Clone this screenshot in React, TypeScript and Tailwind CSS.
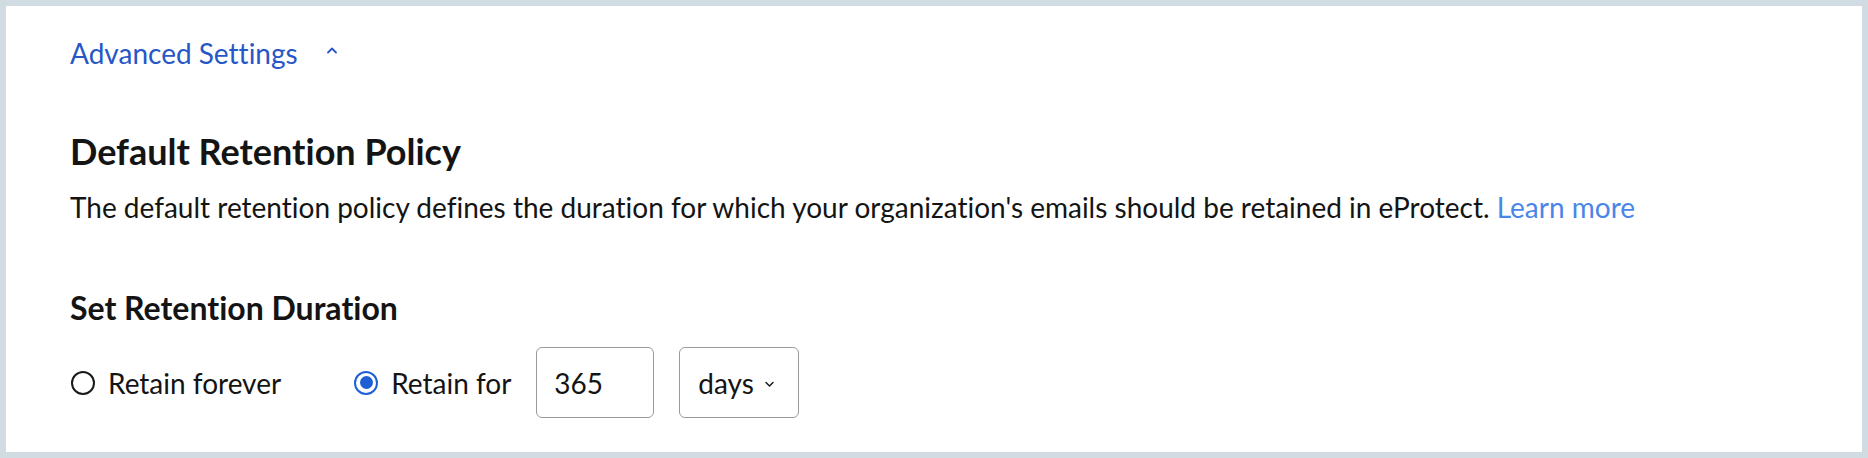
import { useState } from "react";

export default function App() {
  const [mode, setMode] = useState<"forever" | "for">("for");

  return (
    <div
      className="min-h-screen bg-[#d0dbe2] p-[6px] [font-variant-ligatures:none]"
      style={{ fontFamily: "Lato, 'Noto Sans', sans-serif" }}
    >
      <div className="h-[446px] bg-white pl-[64px] pt-[30px] text-[#141414]">
        {/* Advanced settings toggle */}
        <button className="flex items-center text-[28px] leading-[34px] text-[#2756c7]">
          <span>Advanced Settings</span>
          <svg className="ml-[28px] mt-[-6px] h-[10px] w-[12px]" viewBox="0 0 12 10" fill="none">
            <path d="M2 7.5 6 3.5l4 4" stroke="#2756c7" strokeWidth="1.8" strokeLinecap="round" strokeLinejoin="round" />
          </svg>
        </button>

        <h2 className="mt-[59px] text-[36px] font-bold leading-[44px]">Default Retention Policy</h2>
        <p className="mt-[17px] text-[28px] leading-[34px]">
          The default retention policy defines the duration for which your organization's emails should be retained in
          eProtect. <a className="text-[#4a86e8]">Learn more</a>
        </p>

        <h3 className="mt-[65px] text-[32px] font-bold leading-[38px]">Set Retention Duration</h3>

        <div className="mt-[20px] flex h-[71px] items-center text-[28px] leading-[34px]">
          <label className="ml-[1px] flex cursor-pointer items-center" onClick={() => setMode("forever")}>
            <Radio checked={mode === "forever"} />
            <span className="ml-[13px]">Retain forever</span>
          </label>
          <label className="ml-[73px] flex cursor-pointer items-center" onClick={() => setMode("for")}>
            <Radio checked={mode === "for"} />
            <span className="ml-[13px]">Retain for</span>
          </label>
          <div className="ml-[25px] flex h-[71px] w-[118px] items-center rounded-[6px] border border-[#9a9a9a] pl-[17px]">
            365
          </div>
          <div className="ml-[25px] flex h-[71px] w-[120px] items-center rounded-[6px] border border-[#9a9a9a] pl-[18px]">
            <span>days</span>
            <svg className="ml-[10px] mt-[2px] h-[8px] w-[11px]" viewBox="0 0 11 8" fill="none">
              <path d="M2 2.5 5.5 6 9 2.5" stroke="#141414" strokeWidth="1.4" strokeLinecap="round" strokeLinejoin="round" />
            </svg>
          </div>
        </div>
      </div>
    </div>
  );
}

function Radio({ checked }: { checked: boolean }) {
  return checked ? (
    <span className="flex h-[24px] w-[24px] items-center justify-center rounded-full border-[2px] border-[#1f5fd6]">
      <span className="h-[13px] w-[13px] rounded-full bg-[#1f5fd6]" />
    </span>
  ) : (
    <span className="h-[24px] w-[24px] rounded-full border-[2px] border-[#1a1a1a]" />
  );
}
